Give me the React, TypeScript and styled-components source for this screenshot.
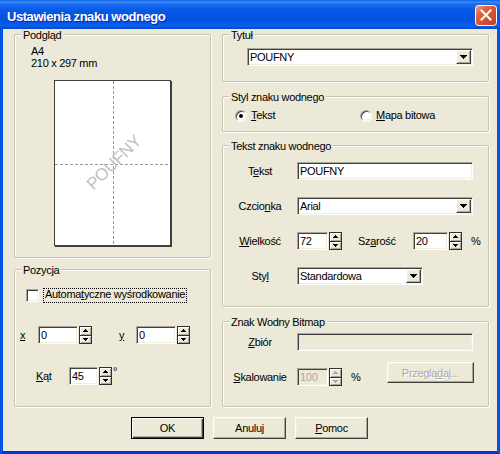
import React from "react";
import styled, { createGlobalStyle, css } from "styled-components";

const FONT = `"Liberation Sans", Arial, sans-serif`;
const FACE = "#ECE9D8";

const GlobalStyle = createGlobalStyle`
  html, body { margin: 0; padding: 0; background: ${FACE}; }
  body { font-family: ${FONT}; font-size: 11px; }
  *, *::before, *::after { box-sizing: border-box; }
`;

const raised = css`
  border: 1px solid;
  border-color: #fff #404040 #404040 #fff;
  box-shadow: inset -1px -1px 0 #aca899, inset 1px 1px 0 #f1efe2;
  background: ${FACE};
`;

const sunken = css`
  border: 1px solid;
  border-color: #aca899 #fff #fff #aca899;
  box-shadow: inset 1px 1px 0 #404040, inset -1px -1px 0 #f1efe2;
`;

const Window = styled.div`
  width: 500px;
  height: 454px;
  display: flex;
  flex-direction: column;
  font-family: ${FONT};
  font-size: 11px;
  letter-spacing: -0.3px;
  color: #000;
  overflow: hidden;
`;

const TitleBar = styled.div`
  flex: none;
  height: 29px;
  display: flex;
  align-items: center;
  justify-content: space-between;
  padding: 0 3px 0 7px;
  background: linear-gradient(
    180deg,
    #0a5fdf 0%,
    #3c8cf8 7%,
    #1c6cf0 14%,
    #0758e6 35%,
    #0454e2 70%,
    #0a5cea 90%,
    #0048cc 100%
  );
`;

const TitleText = styled.span`
  margin-top: 4px;
  font-size: 13px;
  line-height: 15px;
  font-weight: bold;
  color: #fff;
  letter-spacing: -0.45px;
  text-shadow: 1px 1px 0 #0a2a9c;
`;

const CloseBox = styled.div`
  margin-top: 2px;
  width: 22px;
  height: 21px;
  display: flex;
`;

const Body = styled.div`
  flex: 1;
  display: flex;
  flex-direction: column;
  background: ${FACE};
  border: 3px solid #0055e5;
  border-top: 0;
  border-bottom-color: #0831d9;
  padding: 5px 8px 12px 11px;
`;

const Columns = styled.div`
  display: grid;
  grid-template-columns: 197px 267px;
  column-gap: 11px;
`;

const Column = styled.div`
  display: flex;
  flex-direction: column;
`;

const GroupBox = styled.div<{ $h: number; $mt?: number }>`
  position: relative;
  flex: none;
  height: ${(p) => p.$h}px;
  margin-top: ${(p) => p.$mt ?? 0}px;
  border: 1px solid #c5c2b2;
  border-radius: 2px;
  box-shadow: inset 1px 1px 0 #fff, 1px 1px 0 #fff;
`;

const Legend = styled.span`
  position: absolute;
  top: -6px;
  left: 6px;
  padding: 0 2px;
  background: ${FACE};
  line-height: 13px;
  white-space: nowrap;
`;

/* ---------- preview ---------- */
const PreviewBody = styled.div`
  display: flex;
  flex-direction: column;
  padding-top: 10px;
`;

const PaperInfo = styled.div`
  margin-left: 16px;
  line-height: 12px;
`;

const Page = styled.div`
  align-self: center;
  margin-top: 11px;
  width: 117px;
  height: 166px;
  background: #fff;
  border: 1px solid #404040;
  box-shadow: 1px 1px 0 #404040;
  display: flex;
`;

/* ---------- position ---------- */
const PositionBody = styled.div`
  display: flex;
  flex-direction: column;
  padding-top: 18px;
`;

const CheckRow = styled.div`
  display: flex;
  align-items: flex-start;
  gap: 4px;
  margin-left: 11px;
`;

const CheckBox = styled.span`
  ${sunken};
  margin-top: 1px;
  width: 13px;
  height: 13px;
  background: #fff;
  flex: none;
`;

const FocusLabel = styled.span`
  outline: 1px dotted #000;
  outline-offset: -1px;
  padding: 0 2px 2px 2px;
  line-height: 13px;
  white-space: nowrap;
`;

const FieldRow = styled.div<{ $mt: number; $ml: number }>`
  display: flex;
  align-items: center;
  margin-top: ${(p) => p.$mt}px;
  margin-left: ${(p) => p.$ml}px;
`;

const InlineLabel = styled.span<{ $w: number; $ml?: number }>`
  width: ${(p) => p.$w}px;
  margin-left: ${(p) => p.$ml ?? 0}px;
  flex: none;
  line-height: 18px;
  white-space: nowrap;
`;

const Degree = styled.span`
  align-self: flex-start;
  margin-left: 1px;
  margin-top: -2px;
  line-height: 12px;
`;

/* ---------- inputs ---------- */
const TextBox = styled.div<{ $w: number; $disabled?: boolean }>`
  ${sunken};
  width: ${(p) => p.$w}px;
  height: 18px;
  flex: none;
  background: ${(p) => (p.$disabled ? FACE : "#fff")};
  color: ${(p) => (p.$disabled ? "#aca899" : "#000")};
  padding: 0 2px;
  line-height: 16px;
  white-space: nowrap;
  overflow: hidden;
`;

const SpinField = styled.div`
  display: flex;
  gap: 1px;
  flex: none;
`;

const Spin = styled.div`
  display: flex;
  flex-direction: column;
  width: 13px;
  height: 18px;
  flex: none;
  border: 1px solid #303030;
  background: ${FACE};
`;

const SpinHalf = styled.span<{ $top?: boolean }>`
  flex: 1;
  display: flex;
  align-items: center;
  justify-content: center;
  border-bottom: ${(p) => (p.$top ? "1px solid #303030" : "0")};
  box-shadow: inset 1px 1px 0 #fff, inset -1px -1px 0 #aca899;
`;

const ComboBox = styled.div<{ $w: number }>`
  ${sunken};
  width: ${(p) => p.$w}px;
  height: 18px;
  flex: none;
  background: #fff;
  display: flex;
  align-items: stretch;
  padding: 1px;
`;

const ComboText = styled.span`
  flex: 1;
  padding-left: 1px;
  line-height: 14px;
  white-space: nowrap;
`;

const DropButton = styled.span`
  ${raised};
  width: 15px;
  display: flex;
  align-items: center;
  justify-content: center;
`;

/* ---------- right column ---------- */
const TitleBody = styled.div`
  padding: 13px 0 0 24px;
`;

const RadioRow = styled.div`
  display: grid;
  grid-template-columns: 125px auto;
  padding: 12px 0 0 12px;
`;

const RadioItem = styled.label`
  display: flex;
  align-items: center;
  gap: 4px;
  line-height: 13px;
  white-space: nowrap;
`;

const RadioCircle = styled.span<{ $checked?: boolean }>`
  position: relative;
  width: 12px;
  height: 12px;
  flex: none;
  border-radius: 50%;
  background: #fff;
  border: 1px solid;
  border-color: #aca899 #fff #fff #aca899;
  box-shadow: inset 1px 1px 0 #404040, inset -1px -1px 0 #f1efe2;
  &::after {
    content: "";
    display: ${(p) => (p.$checked ? "block" : "none")};
    position: absolute;
    left: 3px;
    top: 3px;
    width: 4px;
    height: 4px;
    border-radius: 50%;
    background: #000;
  }
`;

const FormGrid = styled.div<{ $pt: number; $gap: number }>`
  display: grid;
  grid-template-columns: 74px 1fr;
  row-gap: ${(p) => p.$gap}px;
  align-items: start;
  padding: ${(p) => p.$pt}px 14px 0 0;
`;

const FormLabel = styled.span<{ $mt?: number }>`
  margin-top: ${(p) => p.$mt ?? 0}px;
  text-align: center;
  line-height: 18px;
  white-space: nowrap;
`;

const FormField = styled.div`
  display: flex;
  align-items: flex-start;
`;

const Cluster = styled.div<{ $mt?: number }>`
  display: flex;
  align-items: center;
  margin-top: ${(p) => p.$mt ?? 0}px;
`;

const Unit = styled.span<{ $ml: number }>`
  margin-left: ${(p) => p.$ml}px;
  line-height: 18px;
`;

/* ---------- buttons ---------- */
const ButtonRow = styled.div`
  margin-top: 10px;
  display: flex;
  justify-content: center;
  gap: 9px;
  padding-right: 4px;
`;

const PushButton = styled.button<{ $default?: boolean; $w: number; $h: number; $ml?: string }>`
  appearance: none;
  width: ${(p) => p.$w}px;
  height: ${(p) => p.$h}px;
  margin-left: ${(p) => p.$ml ?? "0"};
  flex: none;
  padding: 0;
  font: inherit;
  letter-spacing: inherit;
  color: #000;
  border-radius: 0;
  ${(p) =>
    p.$default
      ? css`
          border: 1px solid #000;
          background: ${FACE};
          box-shadow: inset 1px 1px 0 #fff, inset -1px -1px 0 #404040, inset -2px -2px 0 #aca899;
        `
      : raised};
  &:disabled {
    color: #aca899;
    text-shadow: 1px 1px 0 #fff;
  }
`;

/* ---------- small drawings ---------- */
const Tri = ({ dir, big, color = "#000" }: { dir: "up" | "down"; big?: boolean; color?: string }) => {
  const rows = big ? [7, 5, 3, 1] : [5, 3, 1];
  const w = rows[0];
  const ordered = dir === "down" ? rows : [...rows].reverse();
  return (
    <svg width={w} height={rows.length} viewBox={`0 0 ${w} ${rows.length}`} shapeRendering="crispEdges">
      {ordered.map((rw, i) => (
        <rect key={i} x={(w - rw) / 2} y={i} width={rw} height={1} fill={color} />
      ))}
    </svg>
  );
};

const SpinButtons = ({ disabled }: { disabled?: boolean }) => (
  <Spin>
    <SpinHalf $top>
      <Tri dir="up" color={disabled ? "#aca899" : "#000"} />
    </SpinHalf>
    <SpinHalf>
      <Tri dir="down" color={disabled ? "#aca899" : "#000"} />
    </SpinHalf>
  </Spin>
);

const NumberInput = ({ w, value, disabled }: { w: number; value: string; disabled?: boolean }) => (
  <SpinField>
    <TextBox $w={w} $disabled={disabled}>
      {value}
    </TextBox>
    <SpinButtons disabled={disabled} />
  </SpinField>
);

const Combo = ({ w, value }: { w: number; value: string }) => (
  <ComboBox $w={w}>
    <ComboText>{value}</ComboText>
    <DropButton>
      <Tri dir="down" big />
    </DropButton>
  </ComboBox>
);

const CloseIcon = () => (
  <svg width="22" height="21" viewBox="0 0 22 21">
    <defs>
      <linearGradient id="closeGrad" x1="0" y1="0" x2="1" y2="1">
        <stop offset="0" stopColor="#f2a890" />
        <stop offset="0.3" stopColor="#e3623f" />
        <stop offset="1" stopColor="#c13a1a" />
      </linearGradient>
    </defs>
    <rect x="0.5" y="0.5" width="21" height="20" rx="3" fill="url(#closeGrad)" stroke="#fff" />
    <path d="M6.5 5.5 L15.5 14.5 M15.5 5.5 L6.5 14.5" stroke="#fff" strokeWidth="2" strokeLinecap="square" />
  </svg>
);

const PagePreview = () => (
  <svg width="115" height="164" viewBox="0 0 115 164">
    <line x1="58.5" y1="0" x2="58.5" y2="164" stroke="#9a9a9a" strokeDasharray="3 2" />
    <line x1="0" y1="83.5" x2="115" y2="83.5" stroke="#9a9a9a" strokeDasharray="3 2" />
    <text
      x="59"
      y="81.5"
      fill="#c2c2c2"
      fontFamily={FONT}
      fontSize="17"
      textAnchor="middle"
      dominantBaseline="central"
      transform="rotate(-45 59 81.5)"
    >
      POUFNY
    </text>
  </svg>
);

export default function App() {
  return (
    <>
      <GlobalStyle />
      <Window>
        <TitleBar>
          <TitleText>Ustawienia znaku wodnego</TitleText>
          <CloseBox>
            <CloseIcon />
          </CloseBox>
        </TitleBar>
        <Body>
          <Columns>
            <Column>
              <GroupBox $h={224}>
                <Legend>Podgląd</Legend>
                <PreviewBody>
                  <PaperInfo>
                    A4
                    <br />
                    210 x 297 mm
                  </PaperInfo>
                  <Page>
                    <PagePreview />
                  </Page>
                </PreviewBody>
              </GroupBox>
              <GroupBox $h={138} $mt={11}>
                <Legend>Pozycja</Legend>
                <PositionBody>
                  <CheckRow>
                    <CheckBox />
                    <FocusLabel>
                      Automa<u>t</u>yczne wyśrodkowanie
                    </FocusLabel>
                  </CheckRow>
                  <FieldRow $mt={23} $ml={5}>
                    <InlineLabel $w={18}>
                      <u>x</u>
                    </InlineLabel>
                    <NumberInput w={40} value="0" />
                    <InlineLabel $w={17} $ml={27}>
                      <u>y</u>
                    </InlineLabel>
                    <NumberInput w={40} value="0" />
                  </FieldRow>
                  <FieldRow $mt={23} $ml={21}>
                    <InlineLabel $w={33}>
                      <u>K</u>ąt
                    </InlineLabel>
                    <NumberInput w={29} value="45" />
                    <Degree>°</Degree>
                  </FieldRow>
                </PositionBody>
              </GroupBox>
            </Column>
            <Column>
              <GroupBox $h={48}>
                <Legend>Tytuł</Legend>
                <TitleBody>
                  <Combo w={226} value="POUFNY" />
                </TitleBody>
              </GroupBox>
              <GroupBox $h={36} $mt={14}>
                <Legend>Styl znaku wodnego</Legend>
                <RadioRow>
                  <RadioItem>
                    <RadioCircle $checked />
                    <span>
                      <u>T</u>ekst
                    </span>
                  </RadioItem>
                  <RadioItem>
                    <RadioCircle />
                    <span>
                      <u>M</u>apa bitowa
                    </span>
                  </RadioItem>
                </RadioRow>
              </GroupBox>
              <GroupBox $h={162} $mt={13}>
                <Legend>Tekst znaku wodnego</Legend>
                <FormGrid $pt={16} $gap={17}>
                  <FormLabel>
                    T<u>e</u>kst
                  </FormLabel>
                  <FormField>
                    <TextBox $w={176}>POUFNY</TextBox>
                  </FormField>
                  <FormLabel>
                    Czcio<u>n</u>ka
                  </FormLabel>
                  <FormField>
                    <Combo w={176} value="Arial" />
                  </FormField>
                  <FormLabel>
                    <u>W</u>ielkość
                  </FormLabel>
                  <FormField>
                    <Cluster>
                      <NumberInput w={31} value="72" />
                      <InlineLabel $w={55} $ml={16}>
                        Sz<u>a</u>rość
                      </InlineLabel>
                      <NumberInput w={35} value="20" />
                      <Unit $ml={9}>%</Unit>
                    </Cluster>
                  </FormField>
                  <FormLabel>
                    Sty<u>l</u>
                  </FormLabel>
                  <FormField>
                    <Combo w={126} value="Standardowa" />
                  </FormField>
                </FormGrid>
              </GroupBox>
              <GroupBox $h={86} $mt={14}>
                <Legend>Znak Wodny Bitmap</Legend>
                <FormGrid $pt={11} $gap={11}>
                  <FormLabel>
                    <u>Z</u>biór
                  </FormLabel>
                  <FormField>
                    <TextBox $w={176} $disabled />
                  </FormField>
                  <FormLabel $mt={6}>
                    <u>S</u>kalowanie
                  </FormLabel>
                  <FormField>
                    <Cluster $mt={6}>
                      <NumberInput w={31} value="100" disabled />
                      <Unit $ml={9}>%</Unit>
                    </Cluster>
                    <PushButton $w={87} $h={21} $ml="auto" disabled>
                      Przeglą<u>d</u>aj...
                    </PushButton>
                  </FormField>
                </FormGrid>
              </GroupBox>
            </Column>
          </Columns>
          <ButtonRow>
            <PushButton $w={73} $h={22} $default>
              OK
            </PushButton>
            <PushButton $w={73} $h={22}>
              Anuluj
            </PushButton>
            <PushButton $w={73} $h={22}>
              <u>P</u>omoc
            </PushButton>
          </ButtonRow>
        </Body>
      </Window>
    </>
  );
}
